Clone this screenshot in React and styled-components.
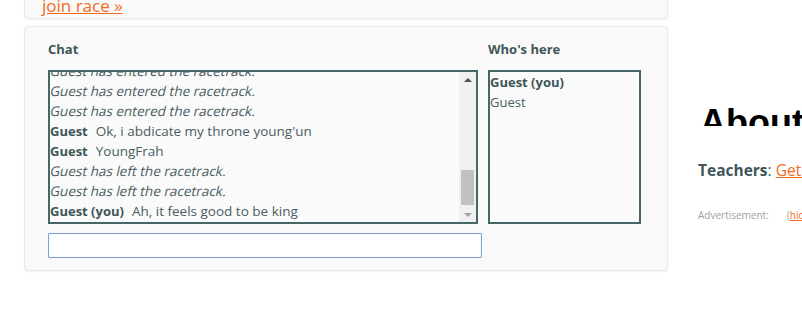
import React from "react";
import styled, { createGlobalStyle } from "styled-components";

const Global = createGlobalStyle`
  html, body { margin: 0; padding: 0; background: #fff; }
  body { font-family: "Open Sans", "DejaVu Sans", sans-serif; overflow: hidden; }
`;

const Page = styled.div`
  display: flex;
  align-items: flex-start;
  width: 802px;
  height: 309px;
  overflow: hidden;
`;

const Main = styled.div`
  display: flex;
  flex-direction: column;
  gap: 7px;
  margin-left: 24px;
  margin-top: -22px;
  width: 644px;
  flex: none;
`;

const Panel = styled.section`
  background: #f9f9f9;
  border: 1px solid #e9e9e9;
  border-radius: 4px;
  box-shadow: 0 1px 2px rgba(0, 0, 0, 0.06);
  padding: ${(p) => p.$pad};
`;

const RaceLink = styled.a`
  font-size: 17px;
  line-height: 24px;
  color: #f26b1d;
  text-decoration: underline;
`;

const ChatGrid = styled.div`
  display: grid;
  grid-template-columns: 430px 153px;
  column-gap: 10px;
`;

const Label = styled.h3`
  margin: 0 0 12px;
  font-size: 13px;
  line-height: 18px;
  font-weight: 700;
  color: #3e5659;
`;

const Box = styled.div`
  height: 150px;
  border: 2px solid #456765;
  background: #fafafa;
  display: flex;
`;

const Messages = styled.div`
  flex: 1;
  overflow: hidden;
  display: flex;
  flex-direction: column;
  justify-content: flex-end;
  padding-bottom: 1px;
`;

const Line = styled.div`
  height: 20px;
  line-height: 20px;
  font-size: 13.5px;
  color: #4a5d61;
  white-space: nowrap;
`;

const SystemText = styled.span`
  display: inline-block;
  transform: skewX(-13deg);
  transform-origin: 0 60%;
`;

const Name = styled.b`
  font-size: 13px;
  font-weight: 700;
  color: #3e5659;
  margin-right: 8px;
`;

const Scrollbar = styled.div`
  width: 17px;
  background: #f0f0f0;
  display: flex;
  flex-direction: column;
  align-items: center;
`;

const Arrow = styled.div`
  width: 0;
  height: 0;
  border-left: 4px solid transparent;
  border-right: 4px solid transparent;
  ${(p) =>
    p.$up
      ? "border-bottom: 4px solid #505050; margin: 6px 0 0;"
      : "border-top: 4px solid #a3a3a3; margin: 6px 0 5px;"}
`;

const Track = styled.div`
  flex: 1;
  width: 100%;
  display: flex;
  flex-direction: column;
  justify-content: flex-end;
  align-items: center;
`;

const Thumb = styled.div`
  width: 13px;
  height: 35px;
  background: #c1c1c1;
  margin-bottom: 2px;
`;

const WhoBox = styled.div`
  height: 150px;
  border: 2px solid #456765;
  background: #fafafa;
`;

const WhoLine = styled.div`
  font-size: 13px;
  line-height: 20px;
  color: ${(p) => (p.$bold ? "#3e5659" : "#4a5d61")};
  font-weight: ${(p) => (p.$bold ? 700 : 400)};
`;

const Input = styled.input`
  display: block;
  box-sizing: border-box;
  margin-top: 9px;
  width: 434px;
  height: 25px;
  border: 1px solid #7e9fdb;
  border-radius: 1px;
  background: #fff;
  box-shadow: inset 0 0 1px rgba(100, 140, 220, 0.5);
  outline: none;
`;

const Side = styled.aside`
  flex: 1;
  padding: 105px 0 0 32px;
  min-width: 0;
`;

const TitleClip = styled.div`
  height: 21px;
  overflow: hidden;
`;

const Title = styled.h1`
  margin: 0;
  font-family: "Liberation Sans", Arial, sans-serif;
  font-size: 36px;
  line-height: 36px;
  font-weight: 700;
  color: #000;
  white-space: nowrap;
`;

const Teachers = styled.p`
  margin: 34px 0 0 -2px;
  font-size: 15.5px;
  line-height: 20px;
  color: #3e5659;
  white-space: nowrap;
`;

const Link = styled.a`
  color: #f26b1d;
  text-decoration: underline;
`;

const Ad = styled.div`
  display: flex;
  gap: 18px;
  margin: 29px 0 0 -2px;
  font-size: 10px;
  line-height: 12px;
  color: #a0a0a0;
  white-space: nowrap;
`;

const messages = [
  { sys: true, text: "Guest has entered the racetrack." },
  { sys: true, text: "Guest has entered the racetrack." },
  { sys: true, text: "Guest has entered the racetrack." },
  { name: "Guest", text: "Ok, i abdicate my throne young'un" },
  { name: "Guest", text: "YoungFrah" },
  { sys: true, text: "Guest has left the racetrack." },
  { sys: true, text: "Guest has left the racetrack." },
  { name: "Guest (you)", text: "Ah, it feels good to be king" },
];

export default function App() {
  return (
    <>
      <Global />
      <Page>
        <Main>
          <Panel $pad="15px 17px 0 17px">
            <RaceLink href="#">join race »</RaceLink>
          </Panel>
          <Panel $pad="13px 23px 12px 23px">
            <ChatGrid>
              <div>
                <Label>Chat</Label>
                <Box>
                  <Messages>
                    {messages.map((m, i) =>
                      m.sys ? (
                        <Line key={i}>
                          <SystemText>{m.text}</SystemText>
                        </Line>
                      ) : (
                        <Line key={i}>
                          <Name>{m.name}</Name>
                          {m.text}
                        </Line>
                      )
                    )}
                  </Messages>
                  <Scrollbar>
                    <Arrow $up />
                    <Track>
                      <Thumb />
                    </Track>
                    <Arrow />
                  </Scrollbar>
                </Box>
              </div>
              <div>
                <Label>Who's here</Label>
                <WhoBox>
                  <WhoLine $bold>Guest (you)</WhoLine>
                  <WhoLine>Guest</WhoLine>
                </WhoBox>
              </div>
            </ChatGrid>
            <Input type="text" />
          </Panel>
        </Main>
        <Side>
          <TitleClip>
            <Title>About Typeracer</Title>
          </TitleClip>
          <Teachers>
            <b>Teachers</b>: <Link href="#">Get TypeRacer for your class</Link>
          </Teachers>
          <Ad>
            <span>Advertisement:</span>
            <span>
              (<Link href="#">hide</Link>)
            </span>
          </Ad>
        </Side>
      </Page>
    </>
  );
}
